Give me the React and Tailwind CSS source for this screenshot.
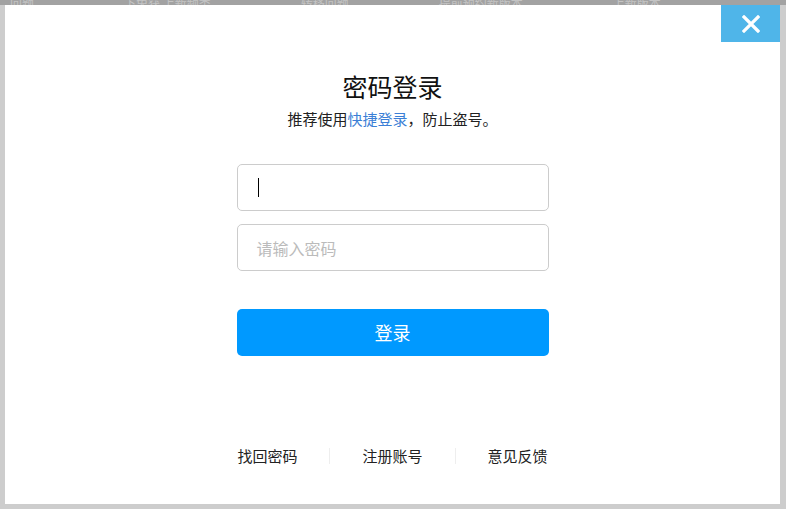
export default function App() {
  const font = { fontFamily: '"Noto Sans CJK SC", "Noto Sans", sans-serif' };
  return (
    <div className="w-[786px] h-[509px] bg-[#cdcdcd] flex flex-col overflow-hidden" style={font}>
      <div aria-hidden="true" className="h-[6px] bg-[#a2a2a2] overflow-hidden flex text-[12px] leading-[8px] text-[#c4c4c4] -mt-[1px] gap-[90px] pl-[10px] shrink-0">
        <span>问题</span>
        <span>下免获 上新频类</span>
        <span>转移问题</span>
        <span>提前预约新版本</span>
        <span>上新版本</span>
      </div>
      <div className="flex pl-[5px] pr-[6px] pb-[5px] flex-1">
        <div className="relative flex-1 bg-white flex flex-col items-center">
          <button className="absolute top-0 right-0 w-[59px] h-[37px] bg-[#4fb5e9] flex items-center justify-center">
            <svg width="18" height="18" viewBox="0 0 18 18">
              <path d="M2 2 L16 16 M16 2 L2 16" stroke="#fff" strokeWidth="3.2" strokeLinecap="square" />
            </svg>
          </button>
          <div className="mt-[64px] h-[34px] leading-[34px] text-[25px] text-[#111]">密码登录</div>
          <div className="mt-[6px] h-[20px] leading-[20px] text-[15px] text-[#222]">
            推荐使用<span className="text-[#3b7fd6]">快捷登录</span>，防止盗号。
          </div>
          <div className="mt-[35px] w-[312px] h-[47px] border border-[#cccccc] rounded-[5px] flex items-center pl-[20px]">
            <span className="w-[1px] h-[19px] bg-black"></span>
          </div>
          <div className="mt-[13px] w-[312px] h-[47px] border border-[#cccccc] rounded-[5px] flex items-center pl-[19px] text-[16px] text-[#bbbbbb]">
            请输入密码
          </div>
          <button className="mt-[38px] w-[312px] h-[47px] rounded-[5px] bg-[#0099ff] text-white text-[18px] flex items-center justify-center">
            登录
          </button>
          <div className="mt-[90px] flex items-center gap-[32px] text-[15px] leading-[20px] text-[#222]">
            <span>找回密码</span>
            <span className="w-[1px] h-[16px] bg-[#eeeeee]"></span>
            <span>注册账号</span>
            <span className="w-[1px] h-[16px] bg-[#eeeeee]"></span>
            <span>意见反馈</span>
          </div>
        </div>
      </div>
    </div>
  );
}
